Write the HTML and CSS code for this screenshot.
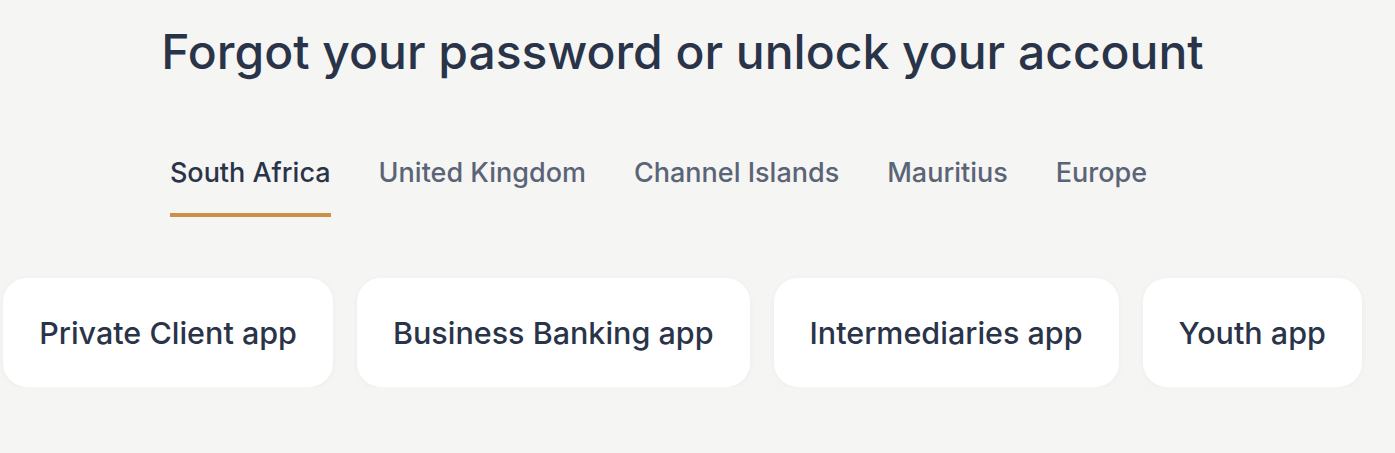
FILE: index.html
```html
<!DOCTYPE html>
<html lang="en">
<head>
<meta charset="utf-8">
<title>Forgot your password</title>
<link rel="stylesheet" href="styles.css">
</head>
<body>
<main class="page">
  <h1 class="title">Forgot your password or unlock your account</h1>
  <nav class="tabs">
    <a class="tab active" href="#">South Africa</a>
    <a class="tab" href="#">United Kingdom</a>
    <a class="tab" href="#">Channel Islands</a>
    <a class="tab" href="#">Mauritius</a>
    <a class="tab" href="#">Europe</a>
  </nav>
  <div class="cards">
    <a class="card" href="#">Private Client app</a>
    <a class="card" href="#">Business Banking app</a>
    <a class="card" href="#">Intermediaries app</a>
    <a class="card" href="#">Youth app</a>
  </div>
</main>
</body>
</html>
```

FILE: styles.css
```css
html, body {
  margin: 0;
  padding: 0;
  background: #f5f5f3;
}
body {
  font-family: Inter, "Noto Sans", sans-serif;
  color: #2a3449;
}
.page {
  width: 1365px;
  display: flex;
  flex-direction: column;
  align-items: center;
}
.title {
  margin: 24px 0 0;
  font-size: 48px;
  font-weight: 500;
  line-height: 56px;
  color: #2a3449;
}
.tabs {
  display: flex;
  gap: 48px;
  margin-top: 76px;
  margin-right: 48px;
}
.tab {
  font-size: 27px;
  font-weight: 500;
  color: #5b6477;
  text-decoration: none;
  padding-bottom: 24px;
  border-bottom: 4px solid transparent;
}
.tab.active {
  color: #2a3449;
  border-bottom-color: #cc9148;
}
.cards {
  display: flex;
  gap: 24px;
  margin-top: 61px;
}
.card {
  background: #ffffff;
  border-radius: 24px;
  height: 109px;
  padding: 0 36px;
  display: flex;
  align-items: center;
  font-size: 30.5px;
  font-weight: 500;
  color: #2a3449;
  text-decoration: none;
  box-shadow: 0 1px 6px rgba(0,0,0,0.04);
  white-space: nowrap;
}
```
